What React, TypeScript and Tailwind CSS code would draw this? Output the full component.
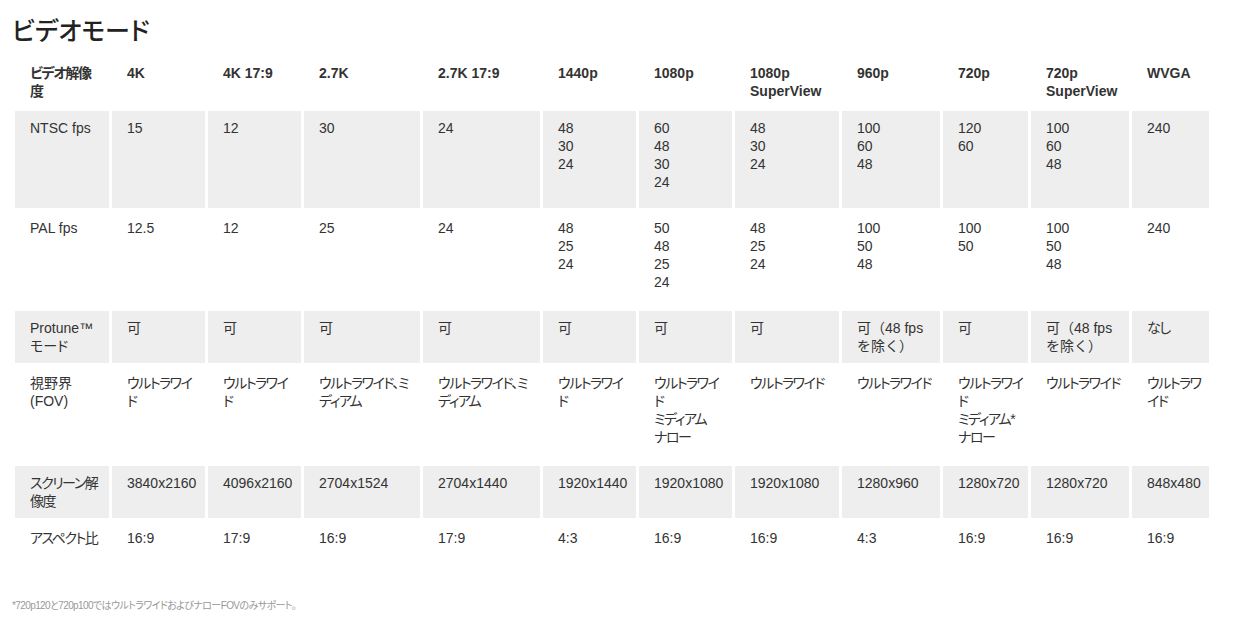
import React from "react";

const header = [
  "ビデオ解像\n度",
  "4K",
  "4K 17:9",
  "2.7K",
  "2.7K 17:9",
  "1440p",
  "1080p",
  "1080p\nSuperView",
  "960p",
  "720p",
  "720p\nSuperView",
  "WVGA",
];

const rows: { cells: string[]; gray: boolean }[] = [
  {
    gray: true,
    cells: [
      "NTSC fps",
      "15",
      "12",
      "30",
      "24",
      "48\n30\n24",
      "60\n48\n30\n24",
      "48\n30\n24",
      "100\n60\n48",
      "120\n60",
      "100\n60\n48",
      "240",
    ],
  },
  {
    gray: false,
    cells: [
      "PAL fps",
      "12.5",
      "12",
      "25",
      "24",
      "48\n25\n24",
      "50\n48\n25\n24",
      "48\n25\n24",
      "100\n50\n48",
      "100\n50",
      "100\n50\n48",
      "240",
    ],
  },
  {
    gray: true,
    cells: [
      "Protune™\nモード",
      "可",
      "可",
      "可",
      "可",
      "可",
      "可",
      "可",
      "可（48 fps\nを除く）",
      "可",
      "可（48 fps\nを除く）",
      "なし",
    ],
  },
  {
    gray: false,
    cells: [
      "視野界\n(FOV)",
      "ウルトラワイ\nド",
      "ウルトラワイ\nド",
      "ウルトラワイド、ミ\nディアム",
      "ウルトラワイド、ミ\nディアム",
      "ウルトラワイ\nド",
      "ウルトラワイ\nド\nミディアム\nナロー",
      "ウルトラワイド",
      "ウルトラワイド",
      "ウルトラワイ\nド\nミディアム*\nナロー",
      "ウルトラワイド",
      "ウルトラワ\nイド",
    ],
  },
  {
    gray: true,
    cells: [
      "スクリーン解\n像度",
      "3840x2160",
      "4096x2160",
      "2704x1524",
      "2704x1440",
      "1920x1440",
      "1920x1080",
      "1920x1080",
      "1280x960",
      "1280x720",
      "1280x720",
      "848x480",
    ],
  },
  {
    gray: false,
    cells: [
      "アスペクト比",
      "16:9",
      "17:9",
      "16:9",
      "17:9",
      "4:3",
      "16:9",
      "16:9",
      "4:3",
      "16:9",
      "16:9",
      "16:9",
    ],
  },
];

const kana = /[\u3040-\u30ff]/;
const latin = /[A-Za-z]/;

function tight(c: string) {
  return kana.test(c) && !latin.test(c) && !c.includes("（");
}

export default function App() {
  return (
    <div className="w-[1236px] h-[617px] bg-white text-[#333333] font-['Liberation_Sans','Noto_Sans_CJK_JP',sans-serif] [font-feature-settings:'palt'] overflow-hidden">
      <div className="pt-[15px] pl-[12px] h-[47px] text-[25px] leading-[32px] font-medium text-[#222222]">
        ビデオモード
      </div>
      <div className="ml-[15px] mt-[9px] grid grid-cols-[94px_93px_93px_116px_117px_93px_93px_104px_98px_85px_98px_77px] grid-rows-[52px_97px_97px_52px_97px_52px_52px] gap-[3px] text-[14px] leading-[18px]">
        {header.map((h, i) => (
          <div
            key={"h" + i}
            className={"pl-[15px] pt-[8px] font-bold whitespace-pre " + (tight(h) ? "tracking-[-1.3px]" : "")}
          >
            {h}
          </div>
        ))}
        {rows.map((r, ri) =>
          r.cells.map((c, ci) => (
            <div
              key={ri + "-" + ci}
              className={
                "pl-[15px] pt-[8px] whitespace-pre " +
                (r.gray ? "bg-[#eeeeee] " : "bg-white ") +
                (c.includes("（") ? "[font-feature-settings:normal] " : "") +
                (tight(c) ? "tracking-[-1.5px]" : "")
              }
            >
              {c}
            </div>
          ))
        )}
      </div>
      <div className="mt-[26px] pl-[12px] text-[10px] leading-[14px] tracking-[-0.6px] text-[#999999]">
        *720p120と720p100ではウルトラワイドおよびナローFOVのみサポート。
      </div>
    </div>
  );
}
